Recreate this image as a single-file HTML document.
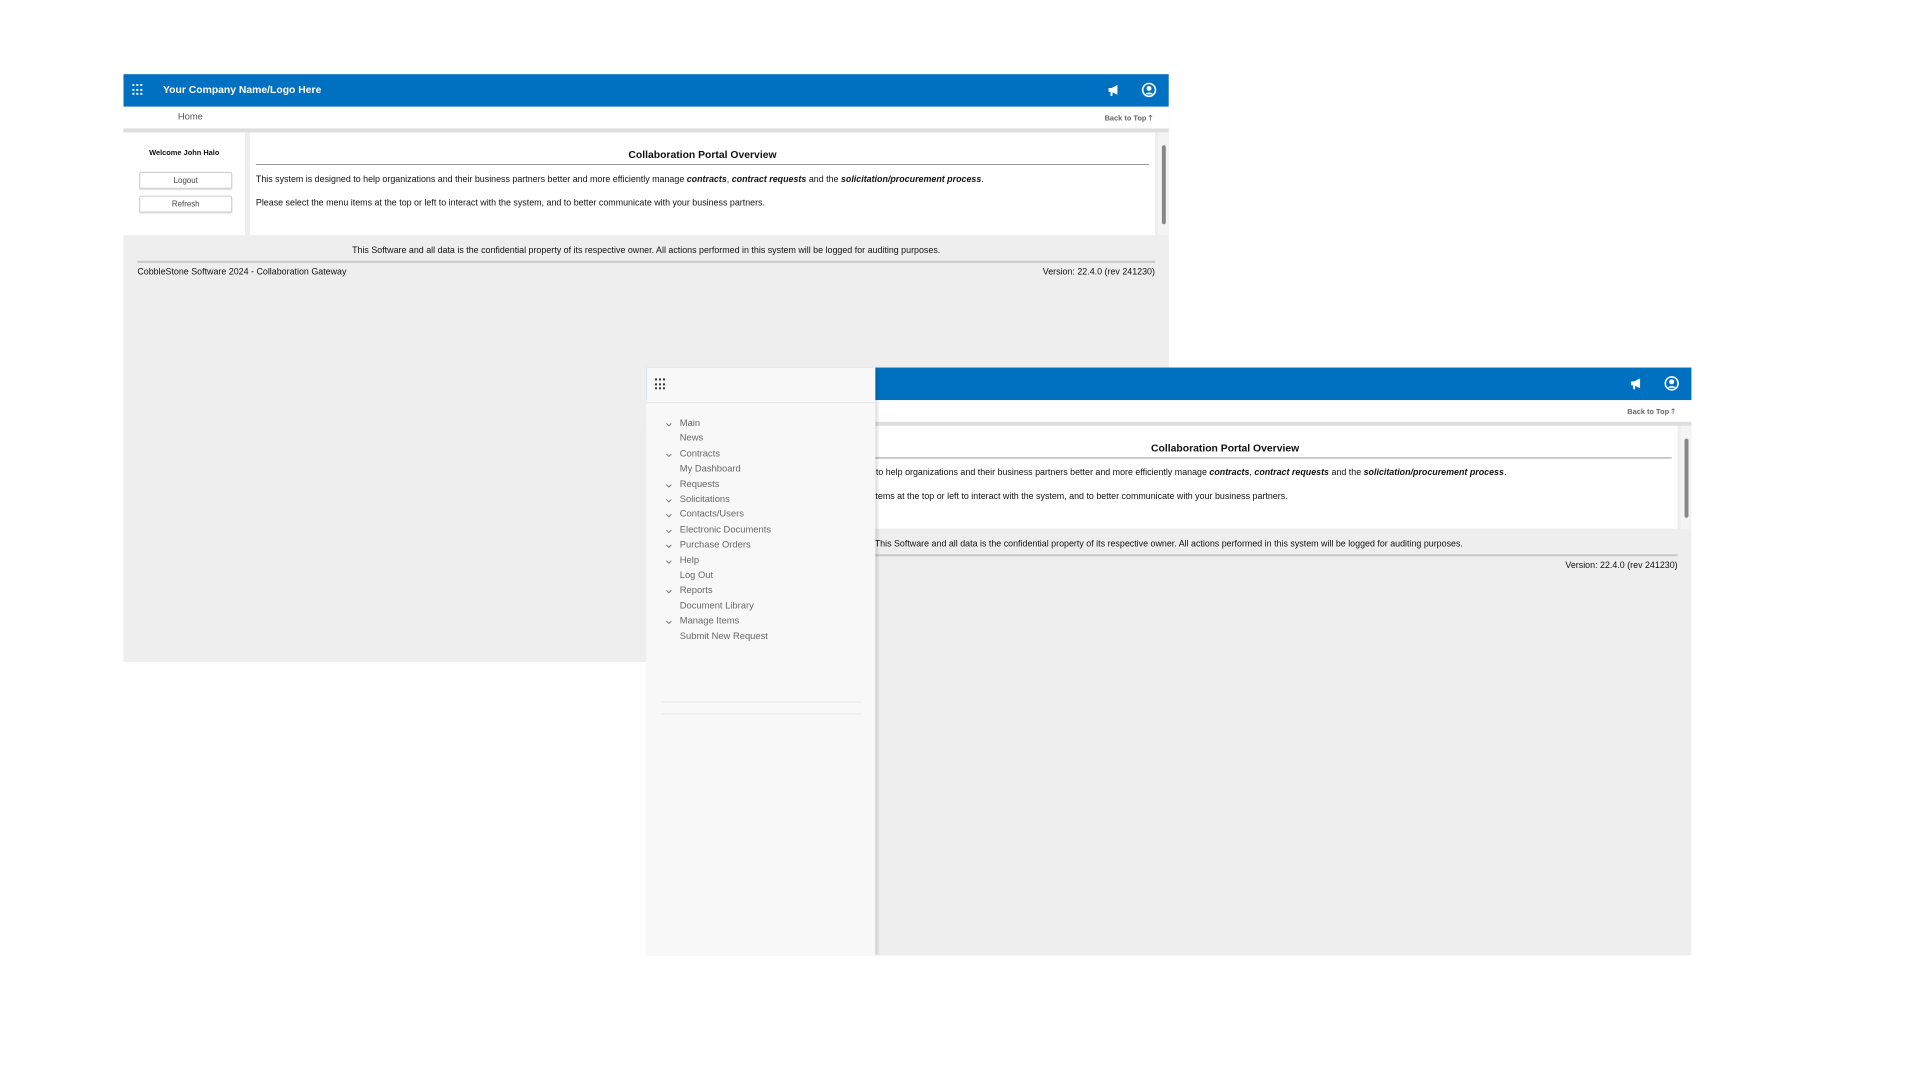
<!DOCTYPE html>
<html><head><meta charset="utf-8"><style>
*{margin:0;padding:0;box-sizing:border-box}
body{width:1920px;height:1080px;background:#fff;position:relative;overflow:hidden;font-family:"Liberation Sans",sans-serif;color:#111}
#wrap{position:absolute;left:0;top:1px;width:1920px;height:1080px;transform:scale(0.988);transform-origin:0 0}
.win{position:absolute;width:1058px;height:595px;background:#eeeeee;overflow:hidden}
.hdr{position:absolute;left:0;top:0;width:1058px;height:33px;background:#0070c0}
.grid{position:absolute;width:12px;height:12px;display:grid;grid-template-columns:repeat(3,2px);grid-gap:2px}
.grid i{width:2px;height:2px;background:#fff;display:block}
.ttl{position:absolute;left:40px;top:10px;color:#fff;font-weight:bold;font-size:10.5px}
.nav{position:absolute;left:0;top:33px;width:1058px;height:22px;background:#fff}
.abs{position:absolute;white-space:nowrap}
.band{position:absolute;left:0;top:55px;width:1058px;height:4px;background:#dedede}
.panel{position:absolute;background:#fff}
.btn{position:absolute;left:16px;width:94px;height:17px;border:1px solid #ccc;border-radius:2px;font-size:8px;color:#444;text-align:center;line-height:15px;box-shadow:0 1px 1px #ddd}
.t{font-size:9px}
.side{position:absolute;left:0;top:0;width:232px;height:595px;background:#f8f8f8;box-shadow:2px 0 3px rgba(0,0,0,.15)}
.mi{position:absolute;left:34px;font-size:9.5px;color:#666}
.ch{position:absolute;left:20px;width:6px;height:4px}
.btt{position:absolute;left:993px;top:39px;font-size:7.5px;font-weight:bold;color:#666;white-space:nowrap}
</style></head><body><div id="wrap">

<div class="win" style="left:125px;top:74px">
 <div class="hdr"></div>
 <div class="grid" style="left:9px;top:10px"><i></i><i></i><i></i><i></i><i></i><i></i><i></i><i></i><i></i></div>
 <div class="ttl">Your Company Name/Logo Here</div>
 <svg class="abs" style="left:995px;top:9px" width="14" height="14" viewBox="0 0 14 14"><path d="M2 5h3l6-3v10l-6-3H2z" fill="#fff"/><rect x="4" y="9" width="2" height="4" fill="#fff"/></svg>
 <svg class="abs" style="left:1030px;top:8px" width="16" height="16" viewBox="0 0 16 16"><circle cx="8" cy="8" r="6.5" fill="none" stroke="#fff" stroke-width="1.6"/><circle cx="8" cy="6.5" r="2.5" fill="#fff"/><path d="M4 12.5c1-2.5 7-2.5 8 0" fill="#fff"/></svg>
 <div class="nav"></div>
 <div class="abs" style="left:55px;top:38px;font-size:9.5px;color:#555">Home</div>
 <div class="btt">Back to Top 🡑</div>
 <div class="band"></div>
 <div class="panel" style="left:0;top:59px;width:123px;height:104px"></div>
 <div class="panel" style="left:128px;top:59px;width:916px;height:104px"></div>
 <div class="panel" style="left:1047px;top:59px;width:11px;height:104px;background:#f4f4f4"></div>
 <div class="abs" style="left:1051px;top:72px;width:4px;height:80px;background:#888;border-radius:2px"></div>
 <div class="abs" style="left:0;width:123px;top:75px;text-align:center;font-size:7.5px;font-weight:bold">Welcome John Halo</div>
 <div class="btn" style="top:99px">Logout</div>
 <div class="btn" style="top:123px">Refresh</div>
 <div class="abs" style="left:134px;width:904px;top:76px;text-align:center;font-size:10.5px;font-weight:bold">Collaboration Portal Overview</div>
 <div class="abs" style="left:134px;top:91px;width:904px;height:1px;background:#999"></div>
 <div class="abs t" style="left:134px;top:101px">This system is designed to help organizations and their business partners better and more efficiently manage <b><i>contracts</i></b>, <b><i>contract requests</i></b> and the <b><i>solicitation/procurement process</i></b>.</div>
 <div class="abs t" style="left:134px;top:125px">Please select the menu items at the top or left to interact with the system, and to better communicate with your business partners.</div>
 <div class="abs t" style="left:0;width:1058px;top:173px;text-align:center">This Software and all data is the confidential property of its respective owner. All actions performed in this system will be logged for auditing purposes.</div>
 <div class="abs" style="left:14px;top:189px;width:1030px;height:2px;background:#c8c8c8"></div>
 <div class="abs t" style="left:14px;top:195px">CobbleStone Software 2024 - Collaboration Gateway</div>
 <div class="abs t" style="right:14px;top:195px">Version: 22.4.0 (rev 241230)</div>
</div>

<div class="win" style="left:654px;top:371px">
 <div class="hdr"></div>
 <svg class="abs" style="left:995px;top:9px" width="14" height="14" viewBox="0 0 14 14"><path d="M2 5h3l6-3v10l-6-3H2z" fill="#fff"/><rect x="4" y="9" width="2" height="4" fill="#fff"/></svg>
 <svg class="abs" style="left:1030px;top:8px" width="16" height="16" viewBox="0 0 16 16"><circle cx="8" cy="8" r="6.5" fill="none" stroke="#fff" stroke-width="1.6"/><circle cx="8" cy="6.5" r="2.5" fill="#fff"/><path d="M4 12.5c1-2.5 7-2.5 8 0" fill="#fff"/></svg>
 <div class="nav"></div>
 <div class="btt">Back to Top 🡑</div>
 <div class="band"></div>
 <div class="panel" style="left:128px;top:59px;width:916px;height:104px"></div>
 <div class="panel" style="left:1047px;top:59px;width:11px;height:104px;background:#f4f4f4"></div>
 <div class="abs" style="left:1051px;top:72px;width:4px;height:80px;background:#888;border-radius:2px"></div>
 <div class="abs" style="left:134px;width:904px;top:76px;text-align:center;font-size:10.5px;font-weight:bold">Collaboration Portal Overview</div>
 <div class="abs" style="left:134px;top:91px;width:904px;height:1px;background:#999"></div>
 <div class="abs t" style="left:134px;top:101px">This system is designed to help organizations and their business partners better and more efficiently manage <b><i>contracts</i></b>, <b><i>contract requests</i></b> and the <b><i>solicitation/procurement process</i></b>.</div>
 <div class="abs t" style="left:134px;top:125px">Please select the menu items at the top or left to interact with the system, and to better communicate with your business partners.</div>
 <div class="abs t" style="left:0;width:1058px;top:173px;text-align:center">This Software and all data is the confidential property of its respective owner. All actions performed in this system will be logged for auditing purposes.</div>
 <div class="abs" style="left:14px;top:189px;width:1030px;height:2px;background:#c8c8c8"></div>
 <div class="abs t" style="right:14px;top:195px">Version: 22.4.0 (rev 241230)</div>

 <div class="side">
  <div class="grid" style="left:9px;top:11px"><i style="background:#333"></i><i style="background:#333"></i><i style="background:#333"></i><i style="background:#333"></i><i style="background:#333"></i><i style="background:#333"></i><i style="background:#333"></i><i style="background:#333"></i><i style="background:#333"></i></div>
  <div class="abs" style="left:0;top:35px;width:232px;height:1px;background:#e6e6e6"></div>
  <svg class="ch" style="top:56px" viewBox="0 0 6 4"><path d="M.5.5L3 3 5.5.5" fill="none" stroke="#777"/></svg><div class="mi" style="top:51px">Main</div>
  <div class="mi" style="top:66px">News</div>
  <svg class="ch" style="top:87px" viewBox="0 0 6 4"><path d="M.5.5L3 3 5.5.5" fill="none" stroke="#777"/></svg><div class="mi" style="top:82px">Contracts</div>
  <div class="mi" style="top:97px">My Dashboard</div>
  <svg class="ch" style="top:118px" viewBox="0 0 6 4"><path d="M.5.5L3 3 5.5.5" fill="none" stroke="#777"/></svg><div class="mi" style="top:113px">Requests</div>
  <svg class="ch" style="top:133px" viewBox="0 0 6 4"><path d="M.5.5L3 3 5.5.5" fill="none" stroke="#777"/></svg><div class="mi" style="top:128px">Solicitations</div>
  <svg class="ch" style="top:148px" viewBox="0 0 6 4"><path d="M.5.5L3 3 5.5.5" fill="none" stroke="#777"/></svg><div class="mi" style="top:143px">Contacts/Users</div>
  <svg class="ch" style="top:164px" viewBox="0 0 6 4"><path d="M.5.5L3 3 5.5.5" fill="none" stroke="#777"/></svg><div class="mi" style="top:159px">Electronic Documents</div>
  <svg class="ch" style="top:179px" viewBox="0 0 6 4"><path d="M.5.5L3 3 5.5.5" fill="none" stroke="#777"/></svg><div class="mi" style="top:174px">Purchase Orders</div>
  <svg class="ch" style="top:195px" viewBox="0 0 6 4"><path d="M.5.5L3 3 5.5.5" fill="none" stroke="#777"/></svg><div class="mi" style="top:190px">Help</div>
  <div class="mi" style="top:205px">Log Out</div>
  <svg class="ch" style="top:225px" viewBox="0 0 6 4"><path d="M.5.5L3 3 5.5.5" fill="none" stroke="#777"/></svg><div class="mi" style="top:220px">Reports</div>
  <div class="mi" style="top:236px">Document Library</div>
  <svg class="ch" style="top:256px" viewBox="0 0 6 4"><path d="M.5.5L3 3 5.5.5" fill="none" stroke="#777"/></svg><div class="mi" style="top:251px">Manage Items</div>
  <div class="mi" style="top:267px">Submit New Request</div>
  <div class="abs" style="left:15px;top:338px;width:203px;height:1px;background:#e8e8e8"></div>
  <div class="abs" style="left:15px;top:350px;width:203px;height:1px;background:#e8e8e8"></div>
 </div>
</div>
</div></body></html>
